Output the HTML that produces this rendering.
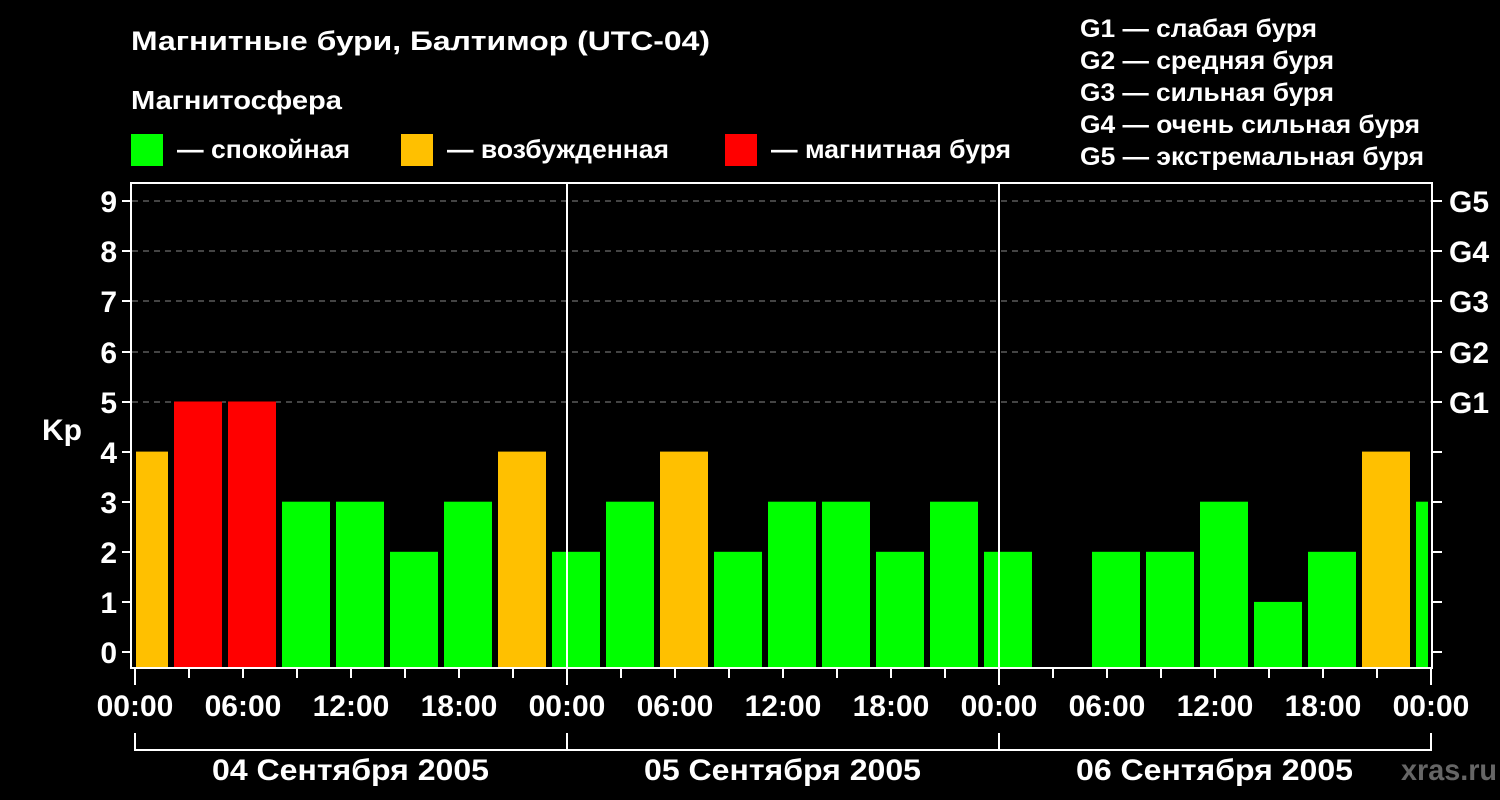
<!DOCTYPE html>
<html><head><meta charset="utf-8"><style>
html,body{margin:0;padding:0;background:#000;width:1500px;height:800px;overflow:hidden}
svg{display:block}
text{font-family:"Liberation Sans",sans-serif;font-weight:bold;fill:#fff}
</style></head><body>
<svg width="1500" height="800" xmlns="http://www.w3.org/2000/svg">
<text x="131" y="50" font-size="27" textLength="579" lengthAdjust="spacingAndGlyphs">Магнитные бури, Балтимор (UTC-04)</text>
<text x="131" y="109" font-size="26" textLength="211" lengthAdjust="spacingAndGlyphs">Магнитосфера</text>
<rect x="131" y="134" width="32" height="32" fill="#00ff00"/>
<text x="177" y="158" font-size="26" textLength="173" lengthAdjust="spacingAndGlyphs">— спокойная</text>
<rect x="401" y="134" width="32" height="32" fill="#ffc000"/>
<text x="447" y="158" font-size="26" textLength="222" lengthAdjust="spacingAndGlyphs">— возбужденная</text>
<rect x="725" y="134" width="32" height="32" fill="#ff0000"/>
<text x="771" y="158" font-size="26" textLength="240" lengthAdjust="spacingAndGlyphs">— магнитная буря</text>
<g font-size="25">
<text x="1080" y="37" textLength="237" lengthAdjust="spacingAndGlyphs">G1 — слабая буря</text>
<text x="1080" y="69" textLength="254" lengthAdjust="spacingAndGlyphs">G2 — средняя буря</text>
<text x="1080" y="101" textLength="254" lengthAdjust="spacingAndGlyphs">G3 — сильная буря</text>
<text x="1080" y="133" textLength="340" lengthAdjust="spacingAndGlyphs">G4 — очень сильная буря</text>
<text x="1080" y="165" textLength="344" lengthAdjust="spacingAndGlyphs">G5 — экстремальная буря</text>
</g>
<g stroke="#888" stroke-width="1" stroke-dasharray="6,5">
<line x1="132" y1="201" x2="1432" y2="201"/><line x1="132" y1="251" x2="1432" y2="251"/>
<line x1="132" y1="301" x2="1432" y2="301"/><line x1="132" y1="352" x2="1432" y2="352"/>
<line x1="132" y1="402" x2="1432" y2="402"/>
</g>
<g>
<rect x="136" y="451.6" width="32" height="215.4" fill="#ffc000"/>
<rect x="174" y="401.5" width="48" height="265.5" fill="#ff0000"/>
<rect x="228" y="401.5" width="48" height="265.5" fill="#ff0000"/>
<rect x="282" y="501.7" width="48" height="165.3" fill="#00ff00"/>
<rect x="336" y="501.7" width="48" height="165.3" fill="#00ff00"/>
<rect x="390" y="551.8" width="48" height="115.2" fill="#00ff00"/>
<rect x="444" y="501.7" width="48" height="165.3" fill="#00ff00"/>
<rect x="498" y="451.6" width="48" height="215.4" fill="#ffc000"/>
<rect x="552" y="551.8" width="48" height="115.2" fill="#00ff00"/>
<rect x="606" y="501.7" width="48" height="165.3" fill="#00ff00"/>
<rect x="660" y="451.6" width="48" height="215.4" fill="#ffc000"/>
<rect x="714" y="551.8" width="48" height="115.2" fill="#00ff00"/>
<rect x="768" y="501.7" width="48" height="165.3" fill="#00ff00"/>
<rect x="822" y="501.7" width="48" height="165.3" fill="#00ff00"/>
<rect x="876" y="551.8" width="48" height="115.2" fill="#00ff00"/>
<rect x="930" y="501.7" width="48" height="165.3" fill="#00ff00"/>
<rect x="984" y="551.8" width="48" height="115.2" fill="#00ff00"/>
<rect x="1092" y="551.8" width="48" height="115.2" fill="#00ff00"/>
<rect x="1146" y="551.8" width="48" height="115.2" fill="#00ff00"/>
<rect x="1200" y="501.7" width="48" height="165.3" fill="#00ff00"/>
<rect x="1254" y="601.9" width="48" height="65.1" fill="#00ff00"/>
<rect x="1308" y="551.8" width="48" height="115.2" fill="#00ff00"/>
<rect x="1362" y="451.6" width="48" height="215.4" fill="#ffc000"/>
<rect x="1416" y="501.7" width="12" height="165.3" fill="#00ff00"/>
</g>
<g stroke="#fff" stroke-width="2">
<path d="M122 201H131M122 251H131M122 301H131M122 352H131M122 402H131M122 452H131M122 502H131M122 552H131M122 602H131M122 652H131"/>
<path d="M1432 201H1442M1432 251H1442M1432 301H1442M1432 352H1442M1432 402H1442M1432 452H1442M1432 502H1442M1432 552H1442M1432 602H1442M1432 652H1442"/>
<path d="M135 668V685M567 668V685M999 668V685M1431 668V685"/>
<path d="M189 668V678M243 668V678M297 668V678M351 668V678M405 668V678M459 668V678M513 668V678M621 668V678M675 668V678M729 668V678M783 668V678M837 668V678M891 668V678M945 668V678M1053 668V678M1107 668V678M1161 668V678M1215 668V678M1269 668V678M1323 668V678M1377 668V678"/>
</g>
<g stroke="#fff" stroke-width="2" fill="none">
<path d="M131 668 V183 H1432 V668 Z"/>
<line x1="567" y1="183" x2="567" y2="668"/><line x1="999" y1="183" x2="999" y2="668"/>
<path d="M135 733 V750 H1431 V733 M567 733 V750 M999 733 V750"/>
</g>
<g font-size="30" text-anchor="end">
<text x="117" y="212">9</text><text x="117" y="262">8</text><text x="117" y="312">7</text>
<text x="117" y="363">6</text><text x="117" y="413">5</text><text x="117" y="463">4</text>
<text x="117" y="513">3</text><text x="117" y="563">2</text><text x="117" y="613">1</text><text x="117" y="663">0</text>
</g>
<text x="42" y="440" font-size="30">Kp</text>
<g font-size="30">
<text x="1449" y="212">G5</text><text x="1449" y="262">G4</text><text x="1449" y="312">G3</text>
<text x="1449" y="363">G2</text><text x="1449" y="413">G1</text>
</g>
<g font-size="30" text-anchor="middle">
<text x="135" y="716">00:00</text><text x="243" y="716">06:00</text><text x="351" y="716">12:00</text><text x="459" y="716">18:00</text>
<text x="567" y="716">00:00</text><text x="675" y="716">06:00</text><text x="783" y="716">12:00</text><text x="891" y="716">18:00</text>
<text x="999" y="716">00:00</text><text x="1107" y="716">06:00</text><text x="1215" y="716">12:00</text><text x="1323" y="716">18:00</text>
<text x="1431" y="716">00:00</text>
</g>
<g font-size="30">
<text x="212" y="780" textLength="277" lengthAdjust="spacingAndGlyphs">04 Сентября 2005</text>
<text x="644" y="780" textLength="277" lengthAdjust="spacingAndGlyphs">05 Сентября 2005</text>
<text x="1076" y="780" textLength="277" lengthAdjust="spacingAndGlyphs">06 Сентября 2005</text>
</g>
<text x="1401" y="780" font-size="30" style="fill:#666" textLength="96" lengthAdjust="spacingAndGlyphs">xras.ru</text>
</svg>
</body></html>
